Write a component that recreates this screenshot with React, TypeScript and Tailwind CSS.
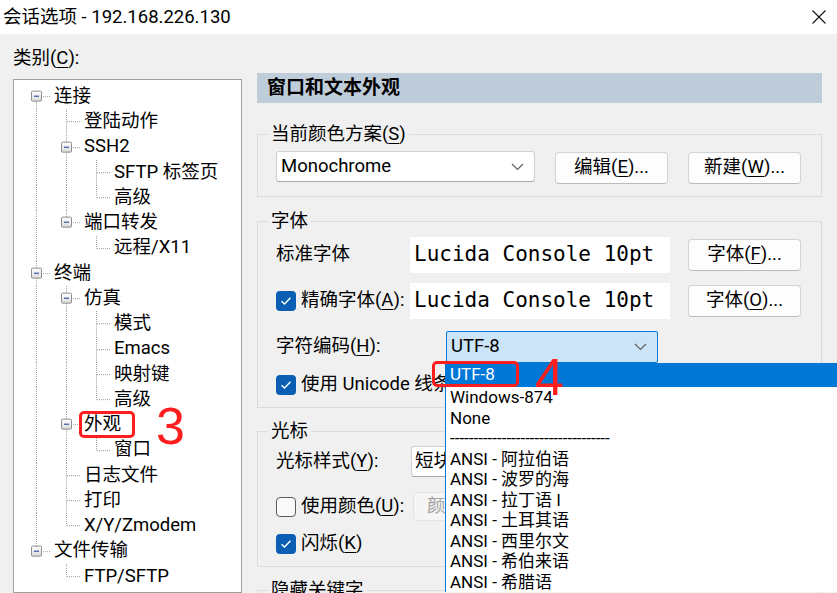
import type { ReactNode } from "react";

type TNode = { label: string; children?: TNode[]; mark?: boolean };
type Row = { node: TNode; depth: number; last: boolean; rails: boolean[]; first: boolean };

const tree: TNode[] = [
  {
    label: "连接",
    children: [
      { label: "登陆动作" },
      { label: "SSH2", children: [{ label: "SFTP 标签页" }, { label: "高级" }] },
      { label: "端口转发", children: [{ label: "远程/X11" }] },
    ],
  },
  {
    label: "终端",
    children: [
      { label: "仿真", children: [{ label: "模式" }, { label: "Emacs" }, { label: "映射键" }, { label: "高级" }] },
      { label: "外观", mark: true, children: [{ label: "窗口" }] },
      { label: "日志文件" },
      { label: "打印" },
      { label: "X/Y/Zmodem" },
    ],
  },
  { label: "文件传输", children: [{ label: "FTP/SFTP" }] },
];

function flatten(nodes: TNode[], depth: number, rails: boolean[], out: Row[]) {
  nodes.forEach((n, i) => {
    const last = i === nodes.length - 1;
    out.push({ node: n, depth, last, rails, first: depth === 0 && i === 0 });
    if (n.children) flatten(n.children, depth + 1, [...rails, !last], out);
  });
  return out;
}

const rows = flatten(tree, 0, [], []);

const encodings = [
  "Windows-874",
  "None",
  "----------------------------------",
  "ANSI - 阿拉伯语",
  "ANSI - 波罗的海",
  "ANSI - 拉丁语 I",
  "ANSI - 土耳其语",
  "ANSI - 西里尔文",
  "ANSI - 希伯来语",
  "ANSI - 希腊语",
];

const dot = { stroke: "#a0a0a0", strokeDasharray: "1 1", strokeWidth: 1 };

function Key({ k }: { k: string }) {
  return (
    <span>
      (<span className="underline underline-offset-[3px]">{k}</span>)
    </span>
  );
}

function Chevron() {
  return (
    <svg width="13" height="8" viewBox="0 0 13 8" className="shrink-0">
      <polyline points="1,1 6.5,6.5 12,1" fill="none" stroke="#606060" strokeWidth="1.2" />
    </svg>
  );
}

function Check({ on }: { on: boolean }) {
  if (!on) return <span className="w-[20px] h-[20px] rounded-[4px] border border-[#5d5d5d] bg-[#f9f9f9] shrink-0" />;
  return (
    <span className="w-[20px] h-[20px] rounded-[4px] bg-[#0a5fb4] flex items-center justify-center shrink-0">
      <svg width="12" height="10" viewBox="0 0 12 10">
        <path d="M1.5 5.2 4.5 8 10.5 1.8" fill="none" stroke="#fff" strokeWidth="1.4" />
      </svg>
    </span>
  );
}

function Btn({ children }: { children: ReactNode }) {
  return (
    <div className="h-[32px] w-[113px] shrink-0 rounded-[4px] border border-[#d3d3d3] border-b-[#bcbcbc] bg-[#fdfdfd] flex items-center justify-center">
      {children}
    </div>
  );
}

function TreeRow({ row }: { row: Row }) {
  const own = row.node.children ? true : false;
  return (
    <div className="relative flex h-[25.25px] items-center">
      {row.rails.map((on, i) => (
        <svg key={i} className="w-[30px] h-full shrink-0">
          {on && <line x1="15.5" y1="0" x2="15.5" y2="100%" {...dot} />}
        </svg>
      ))}
      <svg className="w-[30px] h-full shrink-0">
        {!row.first && <line x1="15.5" y1="0" x2="15.5" y2="50%" {...dot} />}
        {!row.last && <line x1="15.5" y1="50%" x2="15.5" y2="100%" {...dot} />}
        <line x1="16" y1="50%" x2="29" y2="50%" {...dot} />
        {own && (
          <g transform="translate(0 -5.5)">
            <defs>
              <linearGradient id="bx" x1="0" y1="0" x2="0" y2="1">
                <stop offset="0" stopColor="#ffffff" />
                <stop offset="1" stopColor="#d9d9d9" />
              </linearGradient>
            </defs>
            <rect x="10.5" y="50%" width="10" height="10" fill="url(#bx)" stroke="#8f8f8f" rx="1" />
            <rect x="13" y="50%" width="5" height="1.2" fill="#3856a8" transform="translate(0 4.5)" />
          </g>
        )}
      </svg>
      <span className="ml-[3px] whitespace-nowrap">{row.node.label}</span>
      {row.node.mark && (
        <>
          <span className="absolute left-[58px] top-[-1px] w-[56px] h-[27px] border-[3px] border-[#ff1e1e] rounded-[5px]" />
          <span className="absolute left-[135px] top-[-12px] text-[52px] leading-none text-[#ff1e1e] font-['Liberation_Sans',sans-serif]">
            3
          </span>
        </>
      )}
    </div>
  );
}

export default function App() {
  return (
    <div className="w-[837px] h-[593px] overflow-hidden bg-[#f0f0f0] text-[18.5px] text-black flex flex-col font-['Roboto','Noto_Sans_CJK_SC',sans-serif]">
      <header className="h-[34px] bg-white flex items-center justify-between pl-[3px] pr-[11px] shrink-0">
        <span className="leading-none">会话选项 - 192.168.226.130</span>
        <svg width="14" height="14" viewBox="0 0 14 14">
          <path d="M0.5 0.5 13.5 13.5 M13.5 0.5 0.5 13.5" stroke="#111" strokeWidth="1.1" />
        </svg>
      </header>

      <div className="flex flex-1 min-h-0 pl-[13px] gap-[15px]">
        <aside className="w-[229px] shrink-0 pt-[12px] flex flex-col">
          <div className="h-[24px] leading-[24px]">
            类别<Key k="C" />:
          </div>
          <div className="mt-[9px] flex-1 bg-white border border-[#a0a0a0] pl-[7px] pt-[4px]">
            {rows.map((r, i) => (
              <TreeRow key={i} row={r} />
            ))}
          </div>
        </aside>

        <main className="w-[565px] shrink-0 pt-[39px] flex flex-col">
          <div className="h-[30px] shrink-0 bg-[#bfcddb] pl-[10px] flex items-center font-bold text-[19px]">窗口和文本外观</div>

          <fieldset className="mt-[19px] border border-[#dcdcdc] px-[18px] pt-[5px] pb-[12px]">
            <legend className="ml-[-8px] px-[3px] leading-[24px]">
              当前颜色方案<Key k="S" />
            </legend>
            <div className="flex items-start">
              <div className="w-[259px] h-[31px] bg-white border border-[#d0d0d0] border-b-[#a8a8a8] rounded-[3px] pl-[4px] pr-[10px] flex items-center justify-between">
                <span>Monochrome</span>
                <Chevron />
              </div>
              <div className="ml-[20px] mt-[1px]">
                <Btn>
                  编辑<Key k="E" />...
                </Btn>
              </div>
              <div className="ml-[20px] mt-[1px]">
                <Btn>
                  新建<Key k="W" />...
                </Btn>
              </div>
            </div>
          </fieldset>

          <fieldset className="mt-[12px] border border-[#dcdcdc] px-[18px] pt-[4px] pb-[12px]">
            <legend className="ml-[-8px] px-[3px] leading-[24px]">字体</legend>
            <div className="flex items-center h-[36px]">
              <span className="w-[134px] shrink-0">标准字体</span>
              <div className="w-[260px] h-[36px] bg-white pl-[4px] flex items-center text-[21px] font-['DejaVu_Sans_Mono',monospace]">
                Lucida Console 10pt
              </div>
              <div className="ml-[18px]">
                <Btn>
                  字体<Key k="F" />...
                </Btn>
              </div>
            </div>
            <div className="flex items-center h-[36px] mt-[10px]">
              <div className="w-[134px] shrink-0 flex items-center gap-[5px]">
                <Check on />
                <span className="whitespace-nowrap">
                  精确字体<Key k="A" />:
                </span>
              </div>
              <div className="w-[260px] h-[36px] bg-white pl-[4px] flex items-center text-[21px] font-['DejaVu_Sans_Mono',monospace]">
                Lucida Console 10pt
              </div>
              <div className="ml-[18px]">
                <Btn>
                  字体<Key k="O" />...
                </Btn>
              </div>
            </div>
            <div className="flex items-center h-[32px] mt-[12px]">
              <span className="w-[170px] shrink-0">
                字符编码<Key k="H" />:
              </span>
              <div className="relative w-[212px] h-[32px] bg-[#cce4f7] border border-[#0078d7] rounded-[2px] pl-[4px] pr-[10px] flex items-center justify-between z-10">
                <span>UTF-8</span>
                <Chevron />
                <div className="absolute left-[-2px] top-[calc(100%+1px)] w-[400px] bg-white border-l border-[#0078d7] text-[17px]">
                  <div className="relative h-[24px] leading-[23px] bg-[#0078d7] text-white pl-[4px]">
                    UTF-8
                    <span className="absolute left-[-14px] top-[-2px] w-[87px] h-[26px] border-[3px] border-[#ff1e1e] rounded-[5px]" />
                    <span className="absolute left-[89px] top-[-12px] text-[52px] leading-none text-[#ff1e1e] font-['Liberation_Sans',sans-serif]">
                      4
                    </span>
                  </div>
                  {encodings.map((t) => (
                    <div key={t} className="h-[20.5px] leading-[20.5px] pl-[4px] whitespace-nowrap">
                      {t}
                    </div>
                  ))}
                </div>
              </div>
            </div>
            <div className="flex items-center h-[20px] mt-[12px] gap-[5px]">
              <Check on />
              <span className="whitespace-nowrap">使用 Unicode 线条</span>
            </div>
          </fieldset>

          <fieldset className="mt-[11px] border border-[#dcdcdc] px-[18px] pt-[3px] pb-[12px]">
            <legend className="ml-[-8px] px-[3px] leading-[24px]">光标</legend>
            <div className="flex items-center h-[31px]">
              <span className="w-[135px] shrink-0">
                光标样式<Key k="Y" />:
              </span>
              <div className="w-[220px] h-[31px] bg-white border border-[#d0d0d0] border-b-[#a8a8a8] rounded-[3px] pl-[3px] flex items-center">
                短块
              </div>
            </div>
            <div className="flex items-center h-[29px] mt-[15px]">
              <div className="w-[137px] shrink-0 flex items-center gap-[5px]">
                <Check on={false} />
                <span className="whitespace-nowrap">
                  使用颜色<Key k="U" />:
                </span>
              </div>
              <div className="h-[29px] w-[100px] rounded-[4px] border border-[#e3e3e3] bg-[#f5f5f5] text-[#a2a2a2] flex items-center pl-[13px]">
                颜色...
              </div>
            </div>
            <div className="flex items-center h-[20px] mt-[13px] gap-[5px]">
              <Check on />
              <span>
                闪烁<Key k="K" />
              </span>
            </div>
          </fieldset>

          <fieldset className="mt-[11px] border border-[#dcdcdc] px-[18px] pb-[12px] min-h-[60px]">
            <legend className="ml-[-8px] px-[3px] leading-[24px]">隐藏关键字</legend>
          </fieldset>
        </main>
      </div>
    </div>
  );
}
